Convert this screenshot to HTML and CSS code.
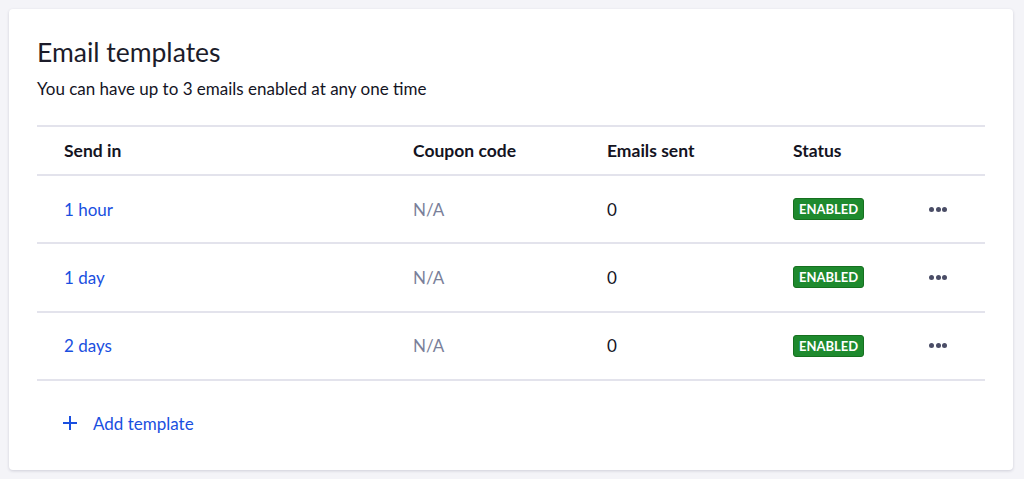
FILE: index.html
```html
<!DOCTYPE html>
<html>
<head>
<meta charset="utf-8">
<link rel="stylesheet" href="styles.css">
</head>
<body>
<div class="card">
  <h1 class="title">Email templates</h1>
  <p class="subtitle">You can have up to 3 emails enabled at any one time</p>
  <div class="table">
    <div class="row head">
      <div class="c c1">Send in</div>
      <div class="c c2">Coupon code</div>
      <div class="c c3">Emails sent</div>
      <div class="c c4">Status</div>
      <div class="c c5"></div>
    </div>
    <div class="row">
      <div class="c c1"><a class="link">1 hour</a></div>
      <div class="c c2 muted">N/A</div>
      <div class="c c3">0</div>
      <div class="c c4"><span class="badge">ENABLED</span></div>
      <div class="c c5"><span class="dots"><i></i><i></i><i></i></span></div>
    </div>
    <div class="row">
      <div class="c c1"><a class="link">1 day</a></div>
      <div class="c c2 muted">N/A</div>
      <div class="c c3">0</div>
      <div class="c c4"><span class="badge">ENABLED</span></div>
      <div class="c c5"><span class="dots"><i></i><i></i><i></i></span></div>
    </div>
    <div class="row">
      <div class="c c1"><a class="link">2 days</a></div>
      <div class="c c2 muted">N/A</div>
      <div class="c c3">0</div>
      <div class="c c4"><span class="badge">ENABLED</span></div>
      <div class="c c5"><span class="dots"><i></i><i></i><i></i></span></div>
    </div>
  </div>
  <div class="add">
    <svg width="16" height="16" viewBox="0 0 16 16"><path d="M8 1v14M1 8h14" stroke="#1a4fe0" stroke-width="2" fill="none"/></svg>
    <span>Add template</span>
  </div>
</div>
</body>
</html>
```
FILE: styles.css
```css
html, body { margin: 0; padding: 0; }
body {
  background: #f4f4f8;
  font-family: Lato, "Liberation Sans", sans-serif;
  color: #14141f;
  padding: 9px 11px 9px 9px;
  height: 479px;
  box-sizing: border-box;
}
.card {
  background: #fff;
  border-radius: 4px;
  box-shadow: 0 1px 3px rgba(40, 40, 80, 0.18);
  padding: 27px 28px 0 28px;
  height: 461px;
  box-sizing: border-box;
}
.title {
  margin: 0;
  font-size: 26.5px;
  font-weight: 400;
  line-height: 32px;
  color: #1c1c2a;
}
.subtitle {
  margin: 11px 0 0 0;
  font-size: 17px;
  line-height: 20px;
}
.table {
  margin-top: 26px;
  border-top: 2px solid #e3e3ec;
}
.row {
  display: flex;
  align-items: center;
  height: 66.3px;
  border-bottom: 2px solid #e3e3ec;
  font-size: 17px;
}
.row.head {
  height: 47px;
  font-weight: 700;
  font-size: 17.5px;
}
.c { box-sizing: border-box; }
.c1 { width: 376px; padding-left: 27px; }
.c2 { width: 194px; }
.c3 { width: 186px; }
.c4 { width: 136px; display: flex; }
.c5 { flex: 1; display: flex; align-items: center; }
.link { color: #1a4fe0; }
.muted { color: #7a7f9a; }
.badge {
  display: inline-block;
  background: #1e8a2e;
  border: 1px solid #16701f;
  color: #fff;
  font-size: 13px;
  font-weight: 700;
  letter-spacing: 0;
  padding: 3px 5px;
  border-radius: 3px;
  line-height: 14px;
}
.dots { display: flex; gap: 1.5px; }
.dots i { width: 5px; height: 5px; border-radius: 50%; background: #4a4d66; display: block; }
.add {
  display: flex;
  align-items: center;
  gap: 15px;
  padding: 32px 0 0 25px;
  color: #1a4fe0;
  font-size: 17px;
}
```
